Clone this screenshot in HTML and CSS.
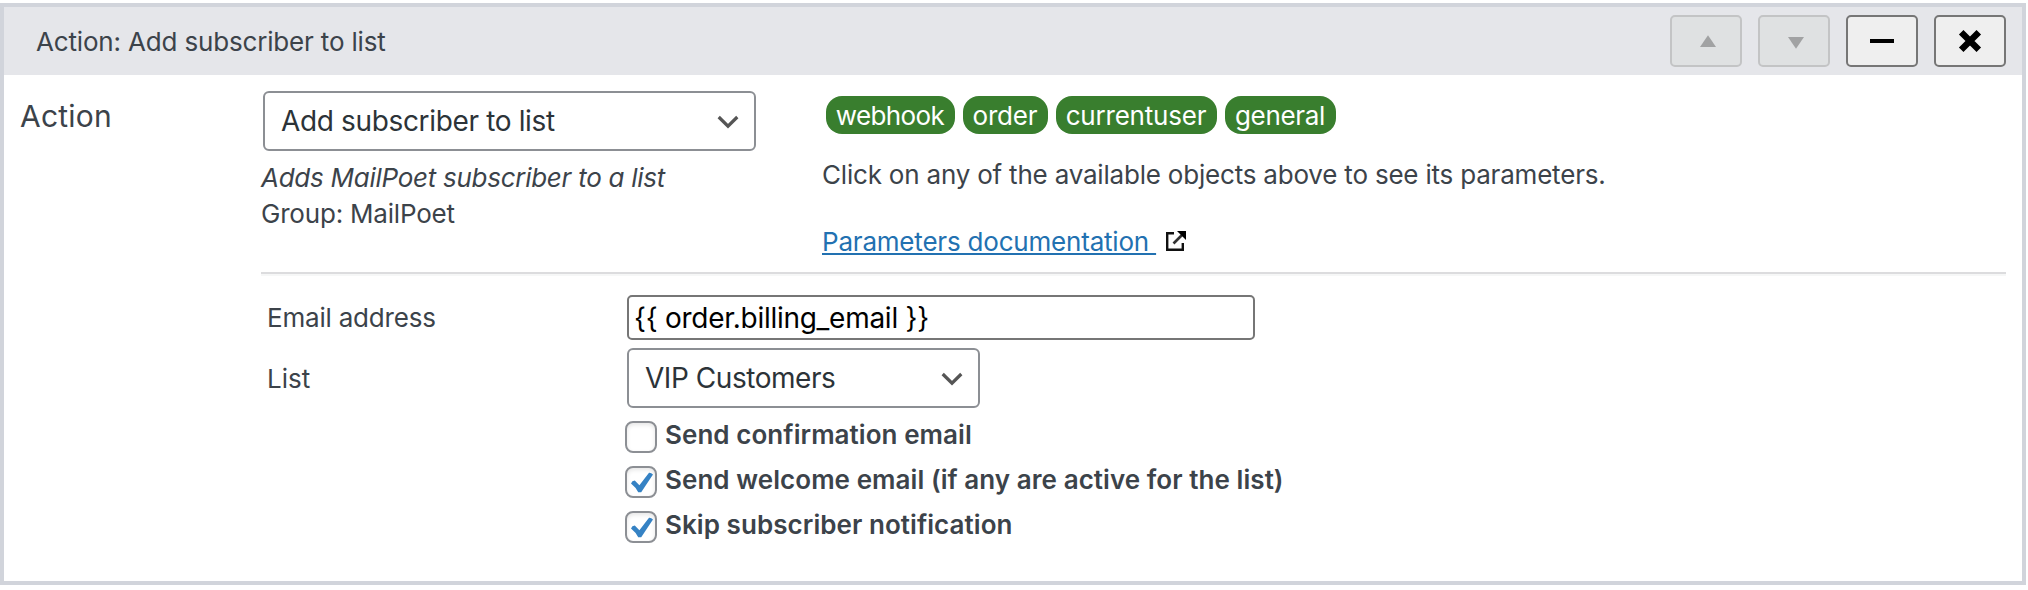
FILE: index.html
```html
<!DOCTYPE html>
<html lang="en">
<head>
<meta charset="utf-8">
<title>Action: Add subscriber to list</title>
<link rel="stylesheet" href="styles.css">
</head>
<body>
<section class="panel">
  <header class="panel-header">
    <h2 class="panel-title">Action: Add subscriber to list</h2>
    <div class="panel-buttons">
      <button class="btn" disabled aria-label="Move up"><svg width="72" height="52" viewBox="0 0 72 52"><path d="M30 32h16L38 20.3z" fill="#a1a2a3"/></svg></button>
      <button class="btn" disabled aria-label="Move down"><svg width="72" height="52" viewBox="0 0 72 52"><path d="M30 22h16L38 33.7z" fill="#a1a2a3"/></svg></button>
      <button class="btn" aria-label="Collapse"><svg width="72" height="52" viewBox="0 0 72 52"><path d="M24 24h24v4H24z"/></svg></button>
      <button class="btn" aria-label="Remove"><svg width="72" height="52" viewBox="0 0 72 52"><path d="M27.2 17.2l17.6 17.6M44.800 17.200L27.200 34.800" stroke="#000" stroke-width="6.400"/></svg></button>
    </div>
  </header>
  <div class="panel-body">
    <div class="section-label">Action</div>
    <div class="content">
      <div class="top">
        <div class="chooser">
          <div class="select select-action"><span>Add subscriber to list</span><svg class="chevron" width="22" height="14" viewBox="0 0 22 14"><path d="M1.700 2L11 11.200 20.300 2" fill="none" stroke="#555" stroke-width="3.200"/></svg></div>
          <p class="description">Adds MailPoet subscriber to a list</p>
          <p class="line">Group: MailPoet</p>
        </div>
        <div class="params">
          <div class="tags">
            <span class="tag tag-webhook">webhook</span>
            <span class="tag tag-order">order</span>
            <span class="tag tag-user">currentuser</span>
            <span class="tag tag-general">general</span>
          </div>
          <p class="line hint">Click on any of the available objects above to see its parameters.</p>
          <p class="line docs"><a class="link" href="#">Parameters documentation&nbsp;</a><svg class="external" width="20" height="20" viewBox="0 0 20 20" fill="none" stroke="#111" stroke-width="2.400"><path d="M8 2.200H1.200V18.800H16.800V12"/><path d="M7.500 12.500L17.500 2.500" stroke="#333" stroke-width="2.600"/><path d="M11 0h9v9z" fill="#000" stroke="none"/></svg></p>
        </div>
      </div>
      <hr class="divider">
      <div class="form">
        <label class="field-label">Email address</label>
        <input class="input" type="text" value="{{ order.billing_email }}">
        <label class="field-label label-list">List</label>
        <div class="select select-list"><span>VIP Customers</span><svg class="chevron" width="22" height="14" viewBox="0 0 22 14"><path d="M1.700 2L11 11.200 20.300 2" fill="none" stroke="#555" stroke-width="3.200"/></svg></div>
        <div class="checks">
          <label class="check"><span class="box"></span>Send confirmation email</label>
          <label class="check"><span class="box"><svg width="28" height="28" viewBox="0 0 28 28"><path d="M4 15.500Q5 12.600 7.800 12.500L12.400 17.300 22 4.800Q24 4.400 26 6.600L14.200 24.200H11.200Q9 19.500 4 15.500z" fill="#3582c4"/></svg></span>Send welcome email (if any are active for the list)</label>
          <label class="check"><span class="box"><svg width="28" height="28" viewBox="0 0 28 28"><path d="M4 15.500Q5 12.600 7.800 12.500L12.400 17.300 22 4.800Q24 4.400 26 6.600L14.200 24.200H11.200Q9 19.500 4 15.500z" fill="#3582c4"/></svg></span>Skip subscriber notification</label>
        </div>
      </div>
    </div>
  </div>
</section>
</body>
</html>
```
FILE: styles.css
```css
* { box-sizing: border-box; }
body {
  margin: 0;
  padding-top: 3px;
  background: #fff;
  color: #3c434a;
  font: 26px/36px Inter, sans-serif;
  letter-spacing: -0.2px;
}
p, h2 { margin: 0; }
.panel {
  width: 2026px;
  height: 582px;
  border: 4px solid #d1d4db;
}
.panel-header {
  display: flex;
  justify-content: space-between;
  align-items: center;
  height: 68px;
  padding: 0 16px 0 32px;
  background: #e5e6ea;
}
.panel-title { font-size: 26px; font-weight: 400; padding-top: 2px; letter-spacing: -0.17px; }
.panel-buttons { display: flex; gap: 16px; }
.btn {
  display: flex;
  align-items: center;
  justify-content: center;
  width: 72px;
  height: 52px;
  padding: 0;
  border: 2px solid #767676;
  border-radius: 5px;
  background: #efefef;
}
.btn svg { flex: none; }
.btn:disabled { border-color: #c3c4c5; background: #dfe1e2; }
.panel-body {
  display: grid;
  grid-template-columns: 241px 1fr;
  padding: 16px 16px 0 16px;
}
.section-label { padding-top: 7px; font-size: 30px; letter-spacing: 0.2px; }
.top { display: grid; grid-template-columns: 561px 1fr; height: 181px; }
.select {
  display: flex;
  align-items: center;
  justify-content: space-between;
  height: 60px;
  padding: 0 15px 0 16px;
  border: 2px solid #8c8f94;
  border-radius: 6px;
  background: #fff;
  color: #2c3338;
  font-size: 28px;
}
.select-action { width: 493px; margin-left: 2px; letter-spacing: -0.35px; }
.select-list { width: 353px; letter-spacing: -0.45px; }
.chevron { margin-top: 2px; }
.description { margin-top: 9px; font-style: italic; letter-spacing: -0.27px; }
.params { padding-top: 5px; }
.tags { display: flex; gap: 8px; padding-left: 4px; }
.tag {
  height: 38px;
  padding-right: 1px;
  border-radius: 16px;
  background: #397e2e;
  color: #fff;
  line-height: 39px;
  text-align: center;
}
.tag-webhook { width: 129px; letter-spacing: -0.6px; }
.tag-order { width: 85px; }
.tag-user { width: 161px; }
.tag-general { width: 111px; letter-spacing: -0.3px; }
.hint { margin-top: 23px; }
.docs { display: flex; align-items: center; margin-top: 31px; }
.link {
  color: #2271b1;
  text-decoration-thickness: 2px;
  text-underline-offset: 2px;
  text-decoration-skip-ink: none;
}
.external { margin: 0 0 2px 10px; }
.divider {
  height: 4px;
  margin: 0;
  border: 0;
  border-top: 2px solid #dcdcde;
  border-bottom: 2px solid #f6f7f7;
}
.form {
  display: grid;
  grid-template-columns: 360px 1fr;
  grid-template-rows: 45px 60px;
  row-gap: 8px;
  align-items: center;
  padding: 19px 0 0 6px;
}
.label-list { padding-top: 2px; letter-spacing: 0; }
.input {
  width: 628px;
  height: 45px;
  padding: 0 5px;
  border: 2px solid #767676;
  border-radius: 5px;
  background: #fff;
  color: #000;
  font: 28px Inter, sans-serif;
  letter-spacing: -0.27px;
}
.checks { grid-column: 2; margin: -4px 0 0 -2px; }
.check {
  display: flex;
  height: 45px;
  gap: 8px;
  font-weight: 600;
  line-height: 45px;
  letter-spacing: 0.06px;
}
.box {
  width: 32px;
  height: 32px;
  margin-top: 9px;
  border: 2px solid #8c8f94;
  border-radius: 8px;
  background: #fff;
  box-shadow: inset 0 2px 4px rgba(0, 0, 0, 0.1);
}
.box svg { display: block; }
```
